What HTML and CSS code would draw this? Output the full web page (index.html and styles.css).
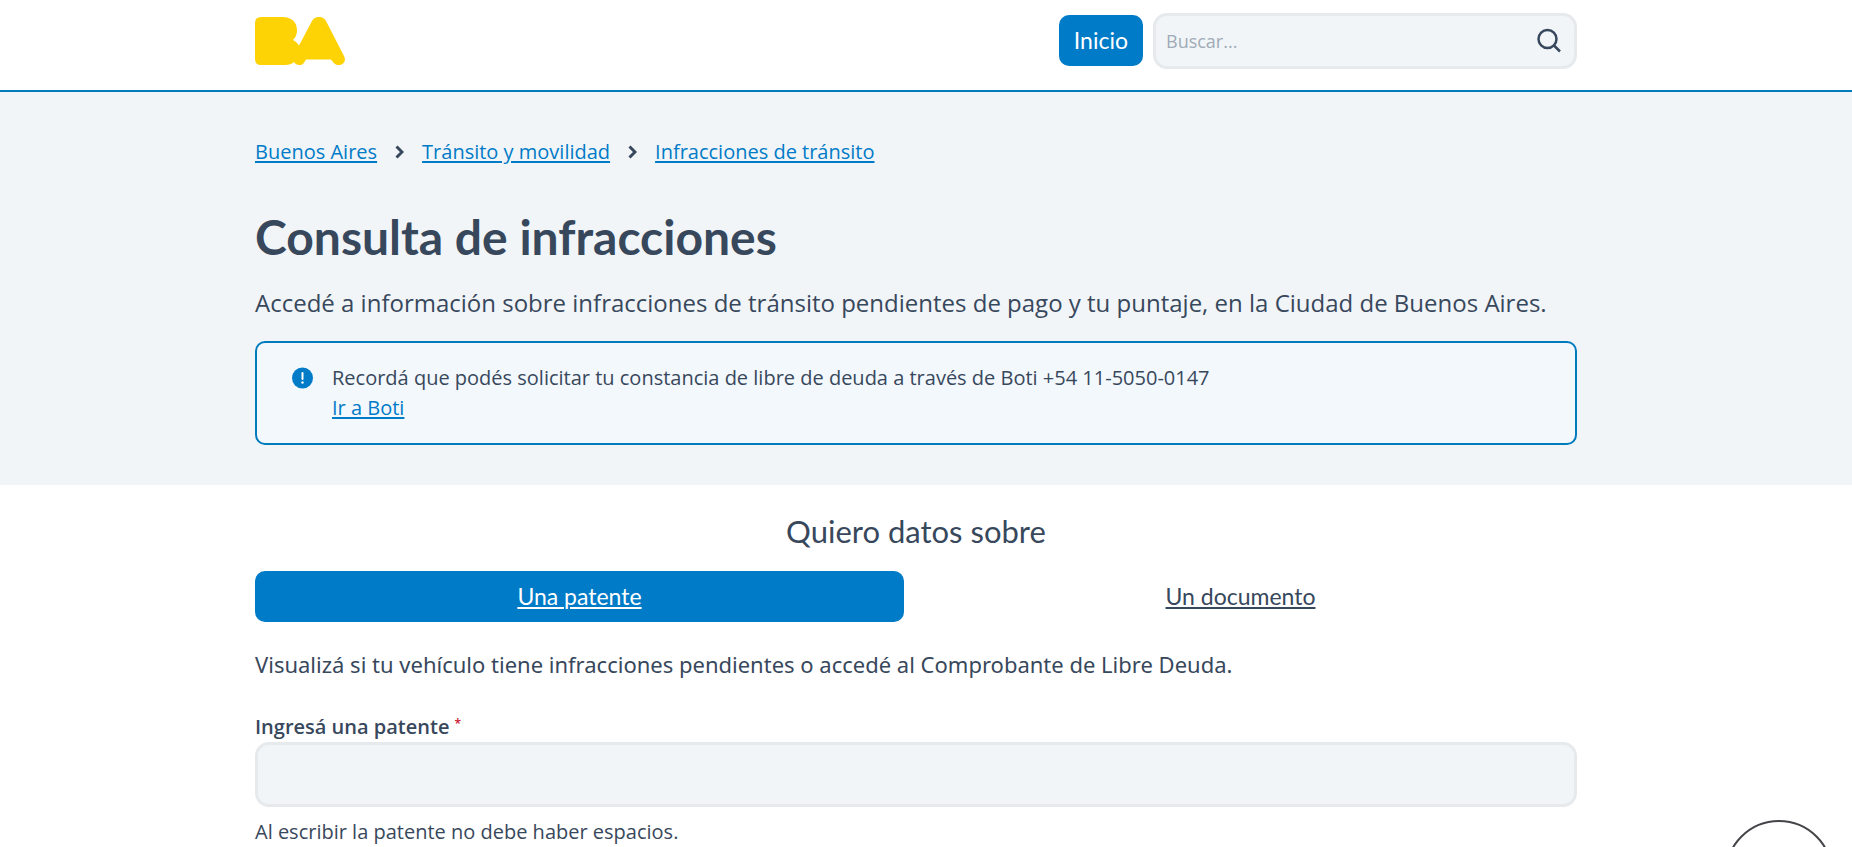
FILE: index.html
```html
<!DOCTYPE html>
<html lang="es">
<head>
<meta charset="utf-8">
<meta name="viewport" content="width=device-width, initial-scale=1">
<title>Consulta de infracciones</title>
<link rel="stylesheet" href="styles.css">
</head>
<body>
<header class="header">
  <div class="container header-row">
    <a class="logo" href="#" aria-label="Buenos Aires">
      <svg width="91" height="49" viewBox="0 0 91 49" aria-hidden="true"><path fill="#fdd306" d="M6 0H28C36 0 42 5 42 13C42 17 41 20 38 23C41 24.500 42.500 26.500 44 28.500L57 4C60-1.500 68-1.500 71 4L89 39C92 45 87 48 84 48C80 48 78.500 46 76 42.500H51C49 46 48 48 44.500 48C42 48 40 47 39 45C37 47 34 48 30 48H6Q0 48 0 42V6Q0 0 6 0Z"/></svg>
    </a>
    <nav class="nav">
      <a class="nav-link" href="#">Inicio</a>
      <form class="search" role="search">
        <input class="search-input" type="search" placeholder="Buscar..." aria-label="Buscar">
        <button class="search-button" type="button" aria-label="Buscar">
          <svg width="26" height="26" viewBox="0 0 26 26" fill="none" stroke="#38485c" stroke-width="2.500" aria-hidden="true"><circle cx="11.500" cy="11" r="9"/><path d="M18 17.500L24 23.500"/></svg>
        </button>
      </form>
    </nav>
  </div>
</header>
<main>
  <section class="hero">
    <div class="container">
      <nav class="breadcrumb" aria-label="Ruta">
        <a href="#">Buenos Aires</a>
        <svg width="9" height="14" viewBox="0 0 9 14" fill="none" stroke="#38485c" stroke-width="3" aria-hidden="true"><path d="M1.500 1.500L7 7L1.500 12.500"/></svg>
        <a href="#">Tránsito y movilidad</a>
        <svg width="9" height="14" viewBox="0 0 9 14" fill="none" stroke="#38485c" stroke-width="3" aria-hidden="true"><path d="M1.500 1.500L7 7L1.500 12.500"/></svg>
        <a href="#">Infracciones de tránsito</a>
      </nav>
      <h1 class="title">Consulta de infracciones</h1>
      <p class="lead">Accedé a información sobre infracciones de tránsito pendientes de pago y tu puntaje, en la Ciudad de Buenos Aires.</p>
      <div class="alert">
        <svg class="alert-icon" width="22" height="22" viewBox="0 0 22 22" aria-hidden="true"><circle cx="10.500" cy="11" r="10.500" fill="#007bc7"/><path d="M10.500 6V12" stroke="#fff" stroke-width="2" stroke-linecap="round"/><circle cx="10.500" cy="15.500" r="1.200" fill="#fff"/></svg>
        <p class="alert-text">Recordá que podés solicitar tu constancia de libre de deuda a través de Boti +54 11-5050-0147<br><a href="#">Ir a Boti</a></p>
      </div>
    </div>
  </section>
  <section class="container query">
    <h2 class="subtitle">Quiero datos sobre</h2>
    <nav class="tabs">
      <a class="tab tab-active" href="#">Una patente</a>
      <a class="tab" href="#">Un documento</a>
    </nav>
    <p class="intro">Visualizá si tu vehículo tiene infracciones pendientes o accedé al Comprobante de Libre Deuda.</p>
    <form class="field">
      <label class="label" for="patente">Ingresá una patente <span class="required">*</span></label>
      <input class="input" id="patente" type="text" aria-describedby="ayuda">
      <p class="help" id="ayuda">Al escribir la patente no debe haber espacios.</p>
    </form>
  </section>
</main>
<button class="chat" type="button" aria-label="Abrir chat"></button>
</body>
</html>
```

FILE: styles.css
```css
* {
  box-sizing: border-box;
}

body {
  margin: 0;
  background: #fff;
  color: #38485c;
  font: 400 20px/30px "Open Sans", sans-serif;
}

h1, h2, p {
  margin: 0;
}

a {
  color: #007bc7;
  text-decoration-thickness: 2px;
  text-underline-offset: 2px;
}

.container {
  max-width: 1322px;
  margin: 0 auto;
}

.header,
.hero,
.query {
  padding-right: 20px;
}

.header {
  border-bottom: 2px solid #007bbc;
}

.header-row {
  display: flex;
  justify-content: space-between;
  align-items: flex-start;
  padding: 13px 0 21px;
}

.logo {
  display: flex;
  padding-top: 4px;
}

.nav {
  display: flex;
  align-items: flex-start;
  gap: 10px;
}

.nav-link {
  margin-top: 2px;
  padding: 10px 15px;
  border-radius: 10px;
  background: #007bc7;
  color: #fff;
  font: 400 23px/31px Lato, sans-serif;
  text-decoration: none;
}

.search {
  display: flex;
  align-items: center;
  width: 424px;
  height: 56px;
  padding: 0 12px 0 10px;
  border: 3px solid #e6eaed;
  border-radius: 14px;
  background: #f1f5f8;
}

.search-input {
  flex: 1;
  min-width: 0;
  padding: 0;
  border: 0;
  outline: 0;
  background: none;
  font: 400 18px/24px "Open Sans", sans-serif;
}

.search-input::placeholder {
  color: #a0abb7;
}

.search-button {
  display: flex;
  padding: 0;
  border: 0;
  background: none;
}

.hero {
  padding-top: 45px;
  padding-bottom: 40px;
  background: #f1f5f8;
}

.breadcrumb {
  display: flex;
  align-items: center;
  gap: 18px;
}

.title {
  margin-top: 40px;
  font: 700 48px/60px Lato, sans-serif;
}

.lead {
  margin: 18px 0 20px;
  font-size: 24px;
  line-height: 36px;
}

.alert {
  display: flex;
  gap: 18px;
  padding: 20px 35px;
  border: 2px solid #007bbc;
  border-radius: 10px;
  background: #f3f8fd;
}

.alert-icon {
  flex: none;
  margin-top: 4px;
}

.query {
  max-width: 1342px;
  padding-top: 26px;
}

.subtitle {
  font: 400 31px/40px Lato, sans-serif;
  text-align: center;
}

.tabs {
  display: flex;
  gap: 12px;
  margin-top: 20px;
  padding-right: 12px;
}

.tab {
  flex: 1;
  padding: 10px;
  border-radius: 10px;
  color: #38485c;
  font: 400 23px/31px Lato, sans-serif;
  text-align: center;
}

.tab-active {
  background: #007bc7;
  color: #fff;
}

.intro {
  margin: 25px 0 31px;
  font-family: "Noto Sans", sans-serif;
  font-size: 22px;
  line-height: 34px;
}

.label {
  display: block;
  font-weight: 600;
}

.required {
  color: #c8102e;
  font-size: 12px;
  vertical-align: 6px;
  line-height: 1;
}

.input {
  display: block;
  width: 100%;
  height: 65px;
  padding: 0 16px;
  border: 3px solid #e6eaed;
  border-radius: 14px;
  background: #f1f5f8;
  color: inherit;
  font: inherit;
}

.help {
  margin-top: 10px;
}

.chat {
  position: fixed;
  right: 19px;
  bottom: -81px;
  width: 108px;
  height: 108px;
  border: 2px solid #444449;
  border-radius: 50%;
  background: #fff;
}
```
